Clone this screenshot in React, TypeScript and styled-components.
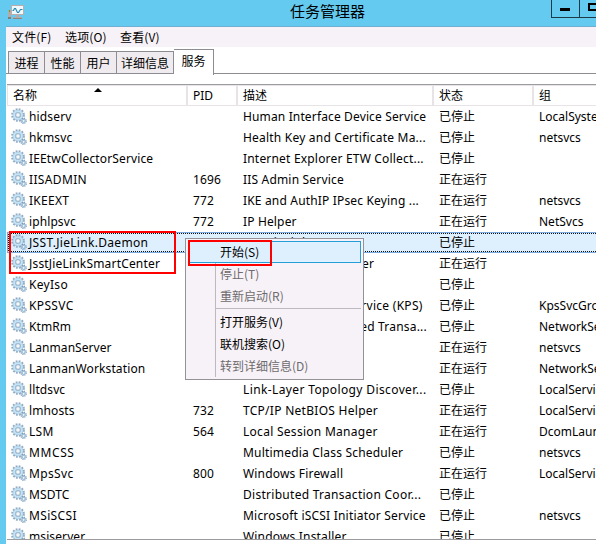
import React from "react";
import styled, { createGlobalStyle, css } from "styled-components";

const GlobalStyle = createGlobalStyle`
  * { box-sizing: border-box; }
  html, body { margin: 0; overflow: hidden; }
  body {
    font-family: "Noto Sans", "Noto Sans CJK SC", sans-serif;
    font-size: 12px;
    color: #000;
    background: #fff;
  }
`;

const Window = styled.div`
  position: relative;
  width: 596px;
  height: 544px;
  overflow: hidden;
  background: #fff;
  border-left: 6px solid #64caf0;
`;

const TitleBar = styled.header`
  display: grid;
  grid-template-columns: 545px 45px;
  height: 27px;
  background: #64caf0;
  border-bottom: 1px solid #70afcf;
`;

const TitleMain = styled.div`
  display: flex;
  align-items: flex-start;
  padding: 5px 0 0 2px;
  svg { flex: none; }
`;

const Title = styled.h1`
  margin: -5px 0 0 265px;
  font: 400 15px/22px "Noto Sans CJK SC", sans-serif;
`;

const WindowButtons = styled.div`
  display: flex;
  height: 18px;
  border: 1px solid #1c3a46;
  border-width: 0 0 1px 1px;
`;

const WindowButton = styled.button`
  flex: 0 0 28px;
  padding: 0;
  border: 0;
  border-right: 1px solid #1c3a46;
  background: none;
  svg { display: block; }
`;

const MenuBar = styled.nav`
  display: flex;
  height: 20px;
  padding-left: 6px;
  background: #f7f2f7;
  font: 12px/20px "Noto Sans CJK SC", sans-serif;
`;

const MenuName = styled.span<{ $width: number }>`
  width: ${(p) => p.$width}px;
  letter-spacing: 0.15px;
  white-space: nowrap;
`;

const TabStrip = styled.div`
  display: flex;
  align-items: flex-end;
  height: 27px;
  padding-left: 2px;
  border-bottom: 1px solid #8c8c92;
`;

const Tab = styled.button<{ $width: number; $active?: boolean }>`
  flex: 0 0 ${(p) => p.$width}px;
  height: 23px;
  margin: 0 0 -1px;
  padding: 0;
  border: 1px solid #8c8c92;
  background: #efebef;
  color: #000;
  font: 12px/20px "Noto Sans CJK SC", sans-serif;
  white-space: nowrap;
  & + & { border-left: 0; }
  ${(p) =>
    p.$active &&
    css`
      height: 26px;
      margin-bottom: -2px;
      padding-bottom: 3px;
      border-bottom: 0;
      background: #fff;
    `}
`;

const Table = styled.main`
  height: 456px;
  margin: 10px 0 0 1px;
  border-top: 1px solid #9c9ca0;
  border-bottom: 1px solid #9c9ca0;
  overflow: hidden;
`;

const TableHeader = styled.div`
  display: grid;
  grid-template-columns: 181px 50px 196px 100px 140px;
  height: 21px;
  border: 1px solid #e7e3e7;
  border-width: 1px 0 1px 0;
`;

const HeaderCell = styled.div`
  position: relative;
  padding-left: 5px;
  font: 12px/20px "Noto Sans", "Noto Sans CJK SC", sans-serif;
  border-right: 2px solid #e7e3e7;
  &:first-child {
    border-left: 1px solid #e7e3e7;
  }
`;

const SortArrow = styled.svg`
  position: absolute;
  left: 86px;
  top: 2px;
`;

const Row = styled.div<{ $selected?: boolean }>`
  display: grid;
  grid-template-columns: 180px 50px 196px 100px 140px;
  height: 21px;
  line-height: 21px;
  white-space: nowrap;
  ${(p) =>
    p.$selected &&
    css`
      background:
        repeating-linear-gradient(90deg, #111 0 1px, #deeffe 1px 2px) 0 1px / 100% 1px no-repeat,
        repeating-linear-gradient(90deg, #111 0 1px, #deeffe 1px 2px) 0 19px / 100% 1px no-repeat,
        repeating-linear-gradient(0deg, #111 0 1px, #deeffe 1px 2px) 1px 0 / 1px 100% no-repeat,
        #deeffe;
      box-shadow: inset 1px 1px #7caade, inset 0 -1px #7caade;
    `}
`;

const NameCell = styled.div<{ $spacing: number }>`
  display: flex;
  padding-left: 4px;
  gap: 2px;
  letter-spacing: ${(p) => p.$spacing}px;
  svg { flex: none; margin-top: 2px; }
`;

const Cell = styled.div<{ $spacing?: number }>`
  padding-left: 6px;
  letter-spacing: ${(p) => p.$spacing ?? 0}px;
`;

const ContextMenu = styled.div`
  position: absolute;
  left: 179px;
  top: 238px;
  width: 179px;
  height: 142px;
  padding: 2px 2px 2px 2px;
  border: 1px solid #949296;
  background:
    linear-gradient(#bdbabd, #bdbabd) 29px 3px / 1px 135px no-repeat,
    #f7f2f7;
`;

const ContextItem = styled.div<{ $state?: "active" | "disabled" }>`
  height: 22px;
  padding-left: 31px;
  border: 1px solid transparent;
  font: 12px/19px "Noto Sans CJK SC", sans-serif;
  white-space: nowrap;
  color: ${(p) => (p.$state === "disabled" ? "#6e6b6e" : "#000")};
  ${(p) =>
    p.$state === "active" &&
    css`
      background: #deeffe;
      border-color: #269fd8;
    `}
`;

const Separator = styled.div`
  height: 4px;
  margin-left: 28px;
  background: linear-gradient(#bdbabd, #bdbabd) 0 1px / 100% 1px no-repeat;
`;

const RedFrame = styled.div<{ $x: number; $y: number; $w: number; $h: number }>`
  position: absolute;
  left: ${(p) => p.$x}px;
  top: ${(p) => p.$y}px;
  width: ${(p) => p.$w}px;
  height: ${(p) => p.$h}px;
  border: 2px solid #fe0000;
  pointer-events: none;
`;

const AppIcon = () => (
  <svg width="17" height="16" viewBox="0 0 17 16">
    <rect x="0" y="5" width="3" height="9" fill="#b5aaa8" />
    <rect x="1" y="5" width="1" height="2" fill="#5fa02c" />
    <rect x="0" y="12" width="3" height="2" fill="#847a78" />
    <rect x="3" y="0" width="13" height="10" fill="#b8aead" />
    <rect x="4" y="1" width="11" height="8" fill="#eef9fd" />
    <path d="M4.5 5.5h1l1-2h1l2 4h1l2-3h2" fill="none" stroke="#2589b8" strokeWidth="1.2" />
    <path d="M8 10h3v2h3v2H5v-2h3z" fill="#b5aaa8" />
    <path d="M5 13.5h9" stroke="#8d8583" />
  </svg>
);

const GearIcon = () => (
  <svg width="16" height="16" viewBox="0 0 16 16" fill="none">
    <circle cx="7" cy="7" r="5.9" stroke="#8fabc4" strokeWidth="1.9" strokeDasharray="1.8 1.29" />
    <circle cx="7" cy="7" r="3.9" stroke="#9fbcd3" strokeWidth="2.9" />
    <circle cx="7" cy="7" r="3.9" stroke="#c3e3f6" strokeWidth="1.9" />
    <circle cx="7" cy="7" r="2.3" fill="#f4f8fb" stroke="#7f9cb5" strokeWidth=".7" />
    <circle cx="12.6" cy="12.8" r="2.5" stroke="#7b9cbb" strokeWidth="1.4" strokeDasharray="1.1 .86" />
    <circle cx="12.6" cy="12.8" r="1.5" stroke="#9dbdd8" strokeWidth="1.3" />
    <circle cx="12.6" cy="12.8" r=".7" fill="#eef6fb" />
  </svg>
);

const S = "已停止";
const R = "正在运行";

type Service = {
  name: string;
  pid?: string;
  description: string;
  status: string;
  group?: string;
  /* letter spacing of the name and of the description */
  track: [number, number];
};

const services: Service[] = [
  { name: "hidserv", description: "Human Interface Device Service", status: S, group: "LocalSystemNetworkRestricted", track: [0.15, 0.14] },
  { name: "hkmsvc", description: "Health Key and Certificate Ma...", status: S, group: "netsvcs", track: [0.1, 0.21] },
  { name: "IEEtwCollectorService", description: "Internet Explorer ETW Collect...", status: S, track: [0.14, 0.19] },
  { name: "IISADMIN", pid: "1696", description: "IIS Admin Service", status: R, track: [0.35, 0.18] },
  { name: "IKEEXT", pid: "772", description: "IKE and AuthIP IPsec Keying ...", status: R, group: "netsvcs", track: [0.3, 0.17] },
  { name: "iphlpsvc", pid: "772", description: "IP Helper", status: R, group: "NetSvcs", track: [0.1, 0.15] },
  { name: "JSST.JieLink.Daemon", description: "JSST.JieLink.Daemon", status: S, track: [0.31, 0.31] },
  { name: "JsstJieLinkSmartCenter", description: "JsstJieLinkSmartCenter", status: R, track: [0.18, 0.18] },
  { name: "KeyIso", description: "CNG Key Isolation", status: S, track: [0.3, 0.2] },
  { name: "KPSSVC", description: "KDC Proxy Server service (KPS)", status: S, group: "KpsSvcGroup", track: [0.35, 0.27] },
  { name: "KtmRm", description: "KtmRm for Distributed Transa...", status: S, group: "NetworkService", track: [0.1, 0.2] },
  { name: "LanmanServer", pid: "772", description: "Server", status: R, group: "netsvcs", track: [0.05, 0.1] },
  { name: "LanmanWorkstation", description: "Workstation", status: R, group: "NetworkService", track: [0.12, 0.1] },
  { name: "lltdsvc", description: "Link-Layer Topology Discover...", status: S, group: "LocalService", track: [0.1, 0.38] },
  { name: "lmhosts", pid: "732", description: "TCP/IP NetBIOS Helper", status: R, group: "LocalServiceNetworkRestricted", track: [0.1, 0.28] },
  { name: "LSM", pid: "564", description: "Local Session Manager", status: R, group: "DcomLaunch", track: [0.3, 0.28] },
  { name: "MMCSS", description: "Multimedia Class Scheduler", status: S, group: "netsvcs", track: [0.6, 0.19] },
  { name: "MpsSvc", pid: "800", description: "Windows Firewall", status: R, group: "LocalServiceNoNetwork", track: [0.35, 0.18] },
  { name: "MSDTC", description: "Distributed Transaction Coor...", status: S, track: [0.1, 0.28] },
  { name: "MSiSCSI", description: "Microsoft iSCSI Initiator Service", status: S, group: "netsvcs", track: [0.35, 0.21] },
  { name: "msiserver", description: "Windows Installer", status: S, track: [0.1, 0.18] },
];

export default function App() {
  return (
    <Window>
      <GlobalStyle />
      <TitleBar>
        <TitleMain>
          <AppIcon />
          <Title>任务管理器</Title>
        </TitleMain>
        <WindowButtons>
          <WindowButton aria-label="Minimize">
            <svg width="27" height="17"><rect x="8" y="8" width="10" height="3" /></svg>
          </WindowButton>
          <WindowButton aria-label="Maximize">
            <svg width="27" height="17"><rect x="9" y="4" width="11" height="6" fill="none" stroke="#000" strokeWidth="2" /></svg>
          </WindowButton>
        </WindowButtons>
      </TitleBar>
      <MenuBar>
        <MenuName $width={53}>文件(F)</MenuName>
        <MenuName $width={55}>选项(O)</MenuName>
        <MenuName $width={50}>查看(V)</MenuName>
      </MenuBar>
      <TabStrip>
        <Tab $width={37}>进程</Tab>
        <Tab $width={36}>性能</Tab>
        <Tab $width={36}>用户</Tab>
        <Tab $width={57}>详细信息</Tab>
        <Tab $width={40} $active>服务</Tab>
      </TabStrip>
      <Table>
        <TableHeader>
          <HeaderCell>
            名称
            <SortArrow width="8" height="4"><path d="M0 4L4 0l4 4z" /></SortArrow>
          </HeaderCell>
          <HeaderCell>PID</HeaderCell>
          <HeaderCell>描述</HeaderCell>
          <HeaderCell>状态</HeaderCell>
          <HeaderCell>组</HeaderCell>
        </TableHeader>
        {services.map(({ name, pid, description, status, group, track }) => (
          <Row key={name} $selected={name === "JSST.JieLink.Daemon"}>
            <NameCell $spacing={track[0]}><GearIcon />{name}</NameCell>
            <Cell $spacing={0.15}>{pid}</Cell>
            <Cell $spacing={track[1]}>{description}</Cell>
            <Cell>{status}</Cell>
            <Cell>{group}</Cell>
          </Row>
        ))}
      </Table>
      <ContextMenu>
        <ContextItem $state="active">开始(S)</ContextItem>
        <ContextItem $state="disabled">停止(T)</ContextItem>
        <ContextItem $state="disabled">重新启动(R)</ContextItem>
        <Separator />
        <ContextItem>打开服务(V)</ContextItem>
        <ContextItem>联机搜索(O)</ContextItem>
        <ContextItem $state="disabled">转到详细信息(D)</ContextItem>
      </ContextMenu>
      <RedFrame $x={3} $y={231} $w={167} $h={43} />
      <RedFrame $x={182} $y={240} $w={84} $h={26} />
    </Window>
  );
}
